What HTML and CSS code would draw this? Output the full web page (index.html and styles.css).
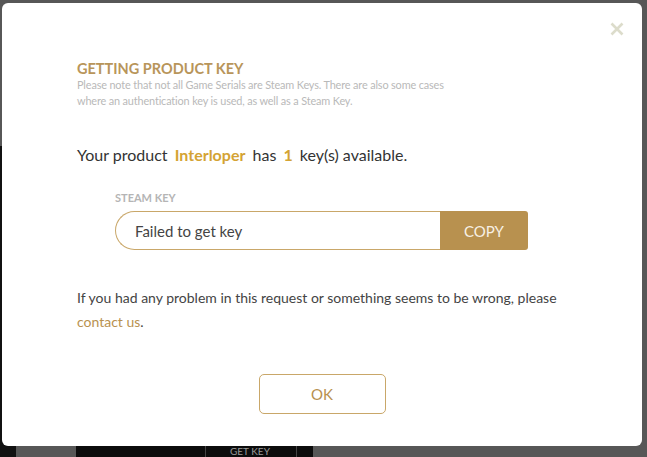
FILE: index.html
```html
<!DOCTYPE html>
<html lang="en">
<head>
    <meta charset="UTF-8">
    <meta name="viewport" content="width=device-width, initial-scale=1.0">
    <title>Getting Product Key</title>
    <link rel="stylesheet" href="styles.css">
</head>
<body>

<!-- page behind the overlay -->
<div class="page">
    <div class="page-side"></div>
    <div class="page-main">
        <div class="game-card">
            <div class="game-title">Interloper</div>
            <div class="game-action">GET KEY</div>
        </div>
    </div>
</div>

<div class="modal">
    <button class="modal-close" aria-label="Close">
        <svg width="14" height="14" viewBox="0 0 14 14">
            <path d="M1.5 1.5 L12.5 12.5 M12.5 1.5 L1.5 12.5" stroke="#dcdccb" stroke-width="2.6" stroke-linecap="butt"/>
        </svg>
    </button>

    <div class="modal-body">
        <h3 class="modal-title">GETTING PRODUCT KEY</h3>
        <p class="modal-note">Please note that not all Game Serials are Steam Keys. There are also some cases where an authentication key is used, as well as a Steam Key.</p>

        <p class="product-line">Your product <strong class="hl">Interloper</strong> has <strong class="hl">1</strong> key(s) available.</p>

        <div class="key-box">
            <label class="key-label" for="steamKey">STEAM KEY</label>
            <div class="key-row">
                <input id="steamKey" class="key-input" type="text" value="Failed to get key" readonly>
                <button class="key-copy">COPY</button>
            </div>
        </div>

        <p class="help">If you had any problem in this request or something seems to be wrong, please <a href="#" class="help-link">contact us</a>.</p>

        <div class="modal-footer">
            <button class="btn-ok">OK</button>
        </div>
    </div>
</div>

</body>
</html>
```

FILE: styles.css
```css
body {
    margin: 0;
    padding: 0;
    background-color: #575757;
    font-family: Lato, "Open Sans", sans-serif;
    height: 457px;
    overflow: hidden;
}
.page {
    display: flex;
    height: 457px;
}
.page-side {
    width: 16px;
    margin-top: 146px;
    background-color: #111;
}
.page-main {
    flex: 1;
    display: flex;
    align-items: flex-end;
    padding-left: 60px;
}
.game-card {
    display: flex;
    width: 237px;
    height: 11px;
    background-color: #0c0c0c;
    font-size: 10px;
    line-height: 11px;
}
.game-title {
    width: 110px;
    padding-left: 19px;
    color: #0c0c0c;
}
.game-action {
    width: 66px;
    border-left: 1px solid #444;
    border-right: 1px solid #444;
    padding-left: 24px;
    color: #999;
}
.modal {
    position: fixed;
    top: 3px;
    left: 2px;
    width: 640px;
    height: 443px;
    background-color: #fff;
    border-radius: 6px;
    box-sizing: border-box;
}
.modal-close {
    position: absolute;
    top: 19px;
    right: 18px;
    border: none;
    background: none;
    padding: 0;
    width: 14px;
    height: 14px;
    cursor: pointer;
}
.modal-close svg {
    display: block;
}
.modal-body {
    padding: 58px 75px 0 75px;
}
.modal-title {
    margin: 0;
    font-size: 14.5px;
    font-weight: bold;
    color: #b8955a;
    line-height: 16px;
}
.modal-note {
    margin: 0;
    max-width: 370px;
    font-size: 10.9px;
    letter-spacing: -0.15px;
    line-height: 16px;
    color: #b9b9b9;
}
.product-line {
    margin: 35px 0 0 0;
    font-size: 16px;
    line-height: 22px;
    color: #333;
}
.hl {
    color: #d4a334;
    margin: 0 3px;
}
.key-box {
    margin: 25px 0 0 38px;
    width: 413px;
}
.key-label {
    display: block;
    font-size: 11px;
    font-weight: bold;
    color: #b5b5b5;
    margin-bottom: 7px;
}
.key-row {
    display: flex;
    height: 39px;
}
.key-input {
    flex: 1;
    min-width: 0;
    border: 1px solid #c9a769;
    border-right: none;
    border-radius: 20px 0 0 20px;
    padding: 0 0 0 19px;
    font-family: inherit;
    font-size: 15px;
    color: #444;
    outline: none;
}
.key-copy {
    width: 88px;
    border: none;
    border-radius: 0 3px 3px 0;
    background-color: #b8914f;
    color: #f7f0e4;
    font-family: inherit;
    font-size: 15px;
    cursor: pointer;
}
.help {
    margin: 36px 0 0 0;
    font-size: 14px;
    line-height: 24px;
    color: #444;
}
.help-link {
    color: #b8914f;
    text-decoration: none;
}
.modal-footer {
    display: flex;
    justify-content: center;
    margin-top: 40px;
}
.btn-ok {
    width: 127px;
    height: 40px;
    border: 1px solid #c9a769;
    border-radius: 5px;
    background-color: #fff;
    color: #b8914f;
    font-family: inherit;
    font-size: 15px;
    cursor: pointer;
}
```
